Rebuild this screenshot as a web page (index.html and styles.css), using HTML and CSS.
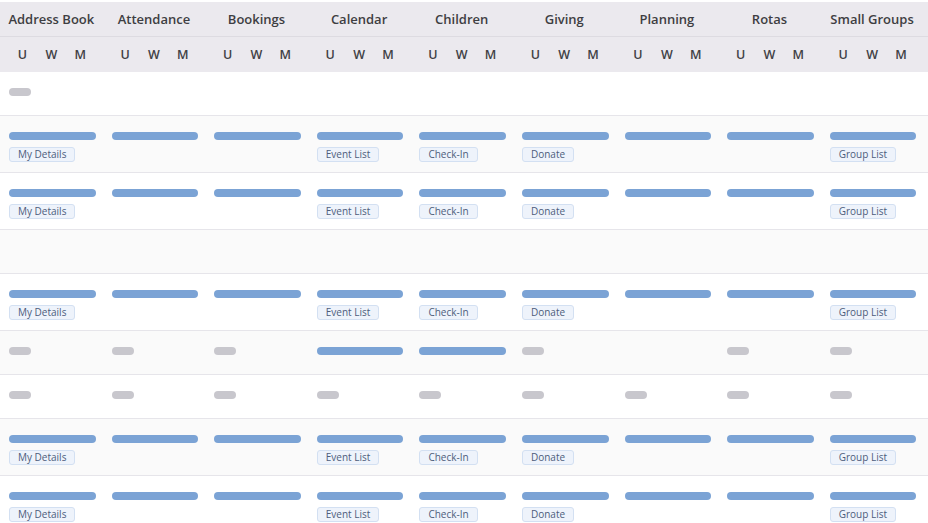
FILE: index.html
```html
<!DOCTYPE html>
<html>
<head>
<meta charset="utf-8">
<link rel="stylesheet" href="styles.css">
</head>
<body>
<div class="table">
  <div class="head head-top">
    <div class="hc">Address Book</div>
    <div class="hc">Attendance</div>
    <div class="hc">Bookings</div>
    <div class="hc">Calendar</div>
    <div class="hc">Children</div>
    <div class="hc">Giving</div>
    <div class="hc">Planning</div>
    <div class="hc">Rotas</div>
    <div class="hc">Small Groups</div>
  </div>
  <div class="head head-sub">
    <div class="sc"><span>U</span><span>W</span><span>M</span></div>
    <div class="sc"><span>U</span><span>W</span><span>M</span></div>
    <div class="sc"><span>U</span><span>W</span><span>M</span></div>
    <div class="sc"><span>U</span><span>W</span><span>M</span></div>
    <div class="sc"><span>U</span><span>W</span><span>M</span></div>
    <div class="sc"><span>U</span><span>W</span><span>M</span></div>
    <div class="sc"><span>U</span><span>W</span><span>M</span></div>
    <div class="sc"><span>U</span><span>W</span><span>M</span></div>
    <div class="sc"><span>U</span><span>W</span><span>M</span></div>
  </div>

  <div class="row">
    <div class="cell"><div class="bar grey"></div></div>
    <div class="cell"></div><div class="cell"></div><div class="cell"></div><div class="cell"></div>
    <div class="cell"></div><div class="cell"></div><div class="cell"></div><div class="cell"></div>
  </div>

  <div class="row alt">
    <div class="cell"><div class="bar"></div><span class="badge">My Details</span></div>
    <div class="cell"><div class="bar"></div></div>
    <div class="cell"><div class="bar"></div></div>
    <div class="cell"><div class="bar"></div><span class="badge">Event List</span></div>
    <div class="cell"><div class="bar"></div><span class="badge">Check-In</span></div>
    <div class="cell"><div class="bar"></div><span class="badge">Donate</span></div>
    <div class="cell"><div class="bar"></div></div>
    <div class="cell"><div class="bar"></div></div>
    <div class="cell"><div class="bar"></div><span class="badge">Group List</span></div>
  </div>

  <div class="row">
    <div class="cell"><div class="bar"></div><span class="badge">My Details</span></div>
    <div class="cell"><div class="bar"></div></div>
    <div class="cell"><div class="bar"></div></div>
    <div class="cell"><div class="bar"></div><span class="badge">Event List</span></div>
    <div class="cell"><div class="bar"></div><span class="badge">Check-In</span></div>
    <div class="cell"><div class="bar"></div><span class="badge">Donate</span></div>
    <div class="cell"><div class="bar"></div></div>
    <div class="cell"><div class="bar"></div></div>
    <div class="cell"><div class="bar"></div><span class="badge">Group List</span></div>
  </div>

  <div class="row alt">
    <div class="cell"></div><div class="cell"></div><div class="cell"></div><div class="cell"></div>
    <div class="cell"></div><div class="cell"></div><div class="cell"></div><div class="cell"></div><div class="cell"></div>
  </div>

  <div class="row">
    <div class="cell"><div class="bar"></div><span class="badge">My Details</span></div>
    <div class="cell"><div class="bar"></div></div>
    <div class="cell"><div class="bar"></div></div>
    <div class="cell"><div class="bar"></div><span class="badge">Event List</span></div>
    <div class="cell"><div class="bar"></div><span class="badge">Check-In</span></div>
    <div class="cell"><div class="bar"></div><span class="badge">Donate</span></div>
    <div class="cell"><div class="bar"></div></div>
    <div class="cell"><div class="bar"></div></div>
    <div class="cell"><div class="bar"></div><span class="badge">Group List</span></div>
  </div>

  <div class="row alt">
    <div class="cell"><div class="bar grey"></div></div>
    <div class="cell"><div class="bar grey"></div></div>
    <div class="cell"><div class="bar grey"></div></div>
    <div class="cell"><div class="bar"></div></div>
    <div class="cell"><div class="bar"></div></div>
    <div class="cell"><div class="bar grey"></div></div>
    <div class="cell"></div>
    <div class="cell"><div class="bar grey"></div></div>
    <div class="cell"><div class="bar grey"></div></div>
  </div>

  <div class="row">
    <div class="cell"><div class="bar grey"></div></div>
    <div class="cell"><div class="bar grey"></div></div>
    <div class="cell"><div class="bar grey"></div></div>
    <div class="cell"><div class="bar grey"></div></div>
    <div class="cell"><div class="bar grey"></div></div>
    <div class="cell"><div class="bar grey"></div></div>
    <div class="cell"><div class="bar grey"></div></div>
    <div class="cell"><div class="bar grey"></div></div>
    <div class="cell"><div class="bar grey"></div></div>
  </div>

  <div class="row alt">
    <div class="cell"><div class="bar"></div><span class="badge">My Details</span></div>
    <div class="cell"><div class="bar"></div></div>
    <div class="cell"><div class="bar"></div></div>
    <div class="cell"><div class="bar"></div><span class="badge">Event List</span></div>
    <div class="cell"><div class="bar"></div><span class="badge">Check-In</span></div>
    <div class="cell"><div class="bar"></div><span class="badge">Donate</span></div>
    <div class="cell"><div class="bar"></div></div>
    <div class="cell"><div class="bar"></div></div>
    <div class="cell"><div class="bar"></div><span class="badge">Group List</span></div>
  </div>

  <div class="row">
    <div class="cell"><div class="bar"></div><span class="badge">My Details</span></div>
    <div class="cell"><div class="bar"></div></div>
    <div class="cell"><div class="bar"></div></div>
    <div class="cell"><div class="bar"></div><span class="badge">Event List</span></div>
    <div class="cell"><div class="bar"></div><span class="badge">Check-In</span></div>
    <div class="cell"><div class="bar"></div><span class="badge">Donate</span></div>
    <div class="cell"><div class="bar"></div></div>
    <div class="cell"><div class="bar"></div></div>
    <div class="cell"><div class="bar"></div><span class="badge">Group List</span></div>
  </div>
</div>
</body>
</html>
```

FILE: styles.css
```css
* { box-sizing: border-box; }
html, body { margin: 0; padding: 0; background: #fff; }
body {
  font-family: "Open Sans", "Noto Sans", sans-serif;
  overflow: hidden;
}
.table {
  padding-top: 2px;
}
.head {
  display: grid;
  grid-template-columns: repeat(9, 102.6px);
  background: #ebe9ee;
}
.head-top {
  height: 35px;
  border-bottom: 1px solid #dddbe1;
}
.hc {
  display: flex;
  align-items: center;
  justify-content: center;
  font-size: 13px;
  font-weight: 600;
  color: #3e3e42;
  white-space: nowrap;
}
.head-sub {
  height: 35px;
}
.sc {
  display: grid;
  grid-template-columns: repeat(3, 1fr);
  padding: 0 8px;
  align-items: center;
}
.sc span {
  text-align: center;
  font-size: 12.5px;
  font-weight: 600;
  color: #414145;
}
.row {
  display: grid;
  grid-template-columns: repeat(9, 102.6px);
  min-height: 44px;
  border-bottom: 1px solid #e6e5ea;
  background: #fff;
}
.row.alt {
  background: #fafafa;
}
.cell {
  padding: 16px 7px 10px 9px;
  display: flex;
  flex-direction: column;
  align-items: flex-start;
}
.bar {
  width: 100%;
  height: 8px;
  border-radius: 4px;
  background: #7ba3d5;
}
.bar.grey {
  width: 22px;
  background: #c8c7cd;
}
.badge {
  margin-top: 7px;
  height: 15px;
  line-height: 13px;
  padding: 0 8px;
  font-size: 10px;
  color: #4d5d7c;
  background: #eef3fb;
  border: 1px solid #d3e0f2;
  border-radius: 3px;
  white-space: nowrap;
}
```
